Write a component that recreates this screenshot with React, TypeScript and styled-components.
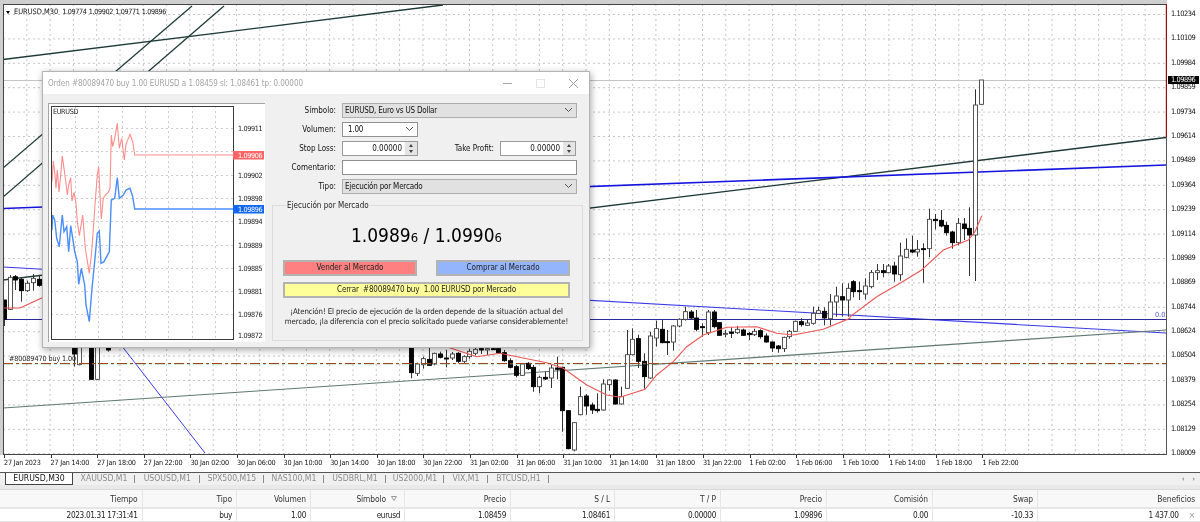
import React from "react";
import styled, { createGlobalStyle } from "styled-components";

const UI_FONT = `"DejaVu Sans Condensed", "Liberation Sans", sans-serif`;

const Global = createGlobalStyle`
  html, body { margin: 0; padding: 0; background: #fff; }
  body { font-family: ${UI_FONT}; overflow: hidden; }
  * { box-sizing: border-box; }
`;

const Page = styled.div`
  width: 1200px;
  height: 522px;
  overflow: hidden;
  display: flex;
  flex-direction: column;
  background: #fff;
  filter: blur(0.3px);
`;

/* ---------- chart ---------- */
const ChartArea = styled.section`
  position: relative;
  height: 472px;
  flex: none;
  display: flex;
  flex-direction: column;
  background: #fff;
`;
const ChartRow = styled.div`
  display: flex;
  height: 455px;
  flex: none;
`;
const PlotFrame = styled.div`
  width: 1167px;
  flex: none;
  padding: 4px 0 0 3px;
  background: #cfcfcf;
`;
const PlotSvg = styled.svg`
  display: block;
  width: 1164px;
  height: 451px;
  background: #fff;
`;
const PriceAxis = styled.div`
  position: relative;
  flex: 1;
  display: flex;
  flex-direction: column;
  gap: 16.4px;
  padding: 10px 0 0 4px;
`;
const PriceTick = styled.span`
  height: 8px;
  flex: none;
  line-height: 8px;
  font-size: 7.4px;
  letter-spacing: -0.45px;
  color: #111;
`;
const PriceBadge = styled.span`
  position: absolute;
  left: 1px;
  top: 76px;
  width: 31px;
  height: 8px;
  padding-left: 3px;
  line-height: 8px;
  font-size: 7.4px;
  letter-spacing: -0.45px;
  background: #000;
  color: #fff;
`;
const TimeAxis = styled.div`
  display: flex;
  height: 17px;
  padding-left: 4px;
`;
const TimeTick = styled.span`
  position: relative;
  width: 46.6px;
  flex: none;
  padding-top: 2px;
  line-height: 12px;
  font-size: 7.2px;
  letter-spacing: -0.2px;
  white-space: nowrap;
  color: #111;
  &::before {
    content: "";
    position: absolute;
    left: 0;
    top: 0;
    width: 1px;
    height: 3px;
    background: #333;
  }
`;
const Legend = styled.div`
  position: absolute;
  left: 6px;
  top: 6px;
  display: flex;
  align-items: center;
  gap: 4px;
  font-size: 7.4px;
  line-height: 12px;
  color: #111;
  white-space: nowrap;
`;
const LegendArrow = styled.i`
  width: 0;
  height: 0;
  border-left: 2.5px solid transparent;
  border-right: 2.5px solid transparent;
  border-top: 3px solid #000;
`;
const LegendValues = styled.span`
  font-size: 7.2px;
  letter-spacing: -0.35px;
  word-spacing: 0.5px;
`;
const OrderTag = styled.span`
  position: absolute;
  left: 9px;
  top: 353px;
  font-size: 7.2px;
  letter-spacing: -0.1px;
  line-height: 12px;
  color: #222;
  white-space: nowrap;
`;
const ZeroTag = styled.span`
  position: absolute;
  left: 1155px;
  top: 309px;
  font-size: 7.2px;
  line-height: 12px;
  color: #4a5ecb;
`;

/* ---------- dialog ---------- */
const Dialog = styled.div`
  position: absolute;
  left: 42px;
  top: 71px;
  width: 548px;
  height: 277px;
  display: flex;
  flex-direction: column;
  background: #f0f0f0;
  border: 1px solid #b4b4b4;
  box-shadow: 1px 2px 7px rgba(0, 0, 0, 0.35);
`;
const TitleBar = styled.header`
  height: 22px;
  flex: none;
  display: flex;
  align-items: center;
  justify-content: space-between;
  padding: 0 9px 0 5px;
  background: #fff;
`;
const TitleText = styled.span`
  font-size: 8px;
  letter-spacing: -0.06px;
  color: #a3a3a3;
  white-space: nowrap;
`;
const WindowButtons = styled.div`
  display: flex;
  align-items: center;
  gap: 20px;
`;
const WindowGlyph = styled.svg`
  display: block;
  width: 13px;
  height: 13px;
  fill: none;
  stroke-width: 1;
`;
const DialogBody = styled.div`
  flex: 1;
  display: flex;
  gap: 7px;
  padding: 9px 6px 6px 5px;
  min-height: 0;
`;
const MiniPanel = styled.div`
  width: 217px;
  flex: none;
  height: 239px;
  background: #fff;
  border-top: 1px solid #a5a5a5;
  border-left: 1px solid #a5a5a5;
`;
const MiniSvg = styled.svg`
  display: block;
  width: 216px;
  height: 238px;
`;
const MiniLabel = styled.text<{ $light?: boolean }>`
  font-size: 7.2px;
  letter-spacing: -0.35px;
  fill: ${(p) => (p.$light ? "#fff" : "#222")};
`;
const FormColumn = styled.div`
  flex: 1;
  display: flex;
  flex-direction: column;
  gap: 4px;
  min-width: 0;
`;
const FormRow = styled.div`
  display: flex;
  align-items: center;
  height: 15px;
`;
const FieldLabel = styled.label<{ $width?: number }>`
  width: ${(p) => p.$width ?? 64}px;
  flex: none;
  margin-right: 6px;
  text-align: right;
  font-size: 8px;
  color: #111;
  white-space: nowrap;
`;
const SelectBox = styled.div<{ $width?: number; $white?: boolean }>`
  width: ${(p) => (p.$width ? `${p.$width}px` : "235px")};
  height: 100%;
  display: flex;
  align-items: center;
  justify-content: space-between;
  padding: 0 3px 0 ${(p) => (p.$white ? 5 : 2)}px;
  font-size: 8px;
  letter-spacing: -0.2px;
  color: #111;
  background: ${(p) => (p.$white ? "#fff" : "#e1e1e1")};
  border: 1px solid ${(p) => (p.$white ? "#8f8f8f" : "#adadad")};
`;
const Chevron = styled.svg`
  width: 9px;
  height: 6px;
  fill: none;
  stroke: #555;
  stroke-width: 1;
`;
const SpinField = styled.div`
  width: 76px;
  height: 100%;
  display: flex;
  background: #fff;
  border: 1px solid #9a9a9a;
`;
const SpinValue = styled.span`
  flex: 1;
  text-align: right;
  padding-right: 3px;
  line-height: 13px;
  font-size: 8px;
  color: #111;
`;
const SpinButtons = styled.div`
  width: 12px;
  flex: none;
  display: flex;
  flex-direction: column;
  align-items: center;
  justify-content: space-evenly;
  background: #e4e4e4;
`;
const SpinArrow = styled.i<{ $up?: boolean }>`
  width: 0;
  height: 0;
  border-left: 2.5px solid transparent;
  border-right: 2.5px solid transparent;
  ${(p) => (p.$up ? "border-bottom" : "border-top")}: 3px solid #444;
`;
const TextField = styled.div`
  width: 235px;
  height: 100%;
  background: #fff;
  border: 1px solid #8f8f8f;
`;
const GroupBox = styled.fieldset`
  margin: 3px 0 0;
  padding: 0 12px 0 10px;
  height: 141px;
  min-width: 0;
  display: flex;
  flex-direction: column;
  border: 1px solid #dcdcdc;
`;
const GroupLegend = styled.legend`
  padding: 0 1px;
  margin-left: 3px;
  font-size: 8px;
  line-height: 10px;
  color: #222;
`;
const Quote = styled.div`
  margin-top: 12px;
  height: 24px;
  line-height: 24px;
  text-align: center;
  font-size: 19px;
  color: #000;
`;
const QuoteSmall = styled.span`
  font-size: 13px;
`;
const TradeRow = styled.div`
  margin-top: 13px;
  display: flex;
  justify-content: space-between;
`;
const TradeButton = styled.button<{ $tone: string; $wide?: boolean }>`
  width: ${(p) => (p.$wide ? "100%" : "134px")};
  height: 16px;
  padding: 0;
  border: 2px solid #b3b3b3;
  background: ${(p) => p.$tone};
  font: 8px ${UI_FONT};
  color: #222;
`;
const CloseLabel = styled.span`
  white-space: pre;
  letter-spacing: -0.15px;
`;
const CloseRow = styled.div`
  margin-top: 6px;
  display: flex;
`;
const Notice = styled.p`
  margin: 9px 0 0;
  text-align: center;
  font-size: 7.8px;
  letter-spacing: -0.1px;
  line-height: 10px;
  color: #222;
  white-space: nowrap;
`;

/* ---------- tabs ---------- */
const TabBar = styled.nav`
  height: 13px;
  flex: none;
  display: flex;
  align-items: stretch;
  padding-left: 5px;
  background: #f0f0f0;
  border-top: 1px solid #555;
`;
const ActiveTab = styled.span`
  width: 68px;
  flex: none;
  text-align: center;
  font-size: 8.6px;
  line-height: 11px;
  color: #111;
  background: #fff;
  border: 1px solid #444;
  border-top: none;
`;
const Tab = styled.span<{ $width: number }>`
  width: ${(p) => p.$width}px;
  flex: none;
  text-align: center;
  font-size: 8.6px;
  line-height: 11px;
  color: #8c8c8c;
  position: relative;
  &::after {
    content: "";
    position: absolute;
    right: 0;
    top: 2px;
    bottom: 2px;
    width: 1px;
    background: #8a8a8a;
  }
`;
const TabArrows = styled.span`
  margin-left: auto;
  display: flex;
  align-items: center;
  gap: 9px;
  padding-right: 5px;
`;
const TabArrow = styled.i<{ $right?: boolean }>`
  width: 0;
  height: 0;
  border-top: 2px solid transparent;
  border-bottom: 2px solid transparent;
  ${(p) => (p.$right ? "border-left" : "border-right")}: 2.5px solid #aaa;
`;

/* ---------- table ---------- */
const Spacer = styled.div`
  height: 4px;
  flex: none;
  background: #e9e9e9;
`;
const COLS = "142.5px 94.5px 74px 94px 106px 104px 106px 106px 106px 105px 1fr";
const Grid = styled.div<{ $head?: boolean }>`
  display: grid;
  grid-template-columns: ${COLS};
  height: ${(p) => (p.$head ? 18 : 15)}px;
  flex: none;
  background: ${(p) => (p.$head ? "#f8f8f8" : "#fff")};
  border-top: ${(p) => (p.$head ? "1px solid #d9d9d9" : "2px solid #e6e6e6")};
  border-bottom: ${(p) => (p.$head ? "none" : "1px solid #e2e2e2")};
`;
const Cell = styled.div<{ $head?: boolean }>`
  display: flex;
  align-items: center;
  justify-content: flex-end;
  gap: 5px;
  padding-right: 4px;
  font-size: ${(p) => (p.$head ? 8.4 : 8.2)}px;
  letter-spacing: ${(p) => (p.$head ? -0.1 : -0.35)}px;
  color: ${(p) => (p.$head ? "#333" : "#222")};
  border-right: 1px solid #e6e6e6;
  white-space: nowrap;
  &:last-child { border-right: none; padding-right: 5px; }
`;
const SortMark = styled.svg`
  width: 6px;
  height: 5px;
  margin-right: 3px;
  fill: none;
  stroke: #999;
`;
const RowClose = styled.span`
  margin-left: 5px;
  color: #999;
  font-size: 9px;
`;

/* ---------- chart data (page coordinates) ---------- */
type Row = [number, number, number, number, number, 0 | 1];

const Z8: Row[] = [
  [32,172,248,172,265,0],[50,222,250,218,258,1],[68,206,224,200,236,1],[86,208,226,172,228,0],[103,190,222,188,226,1],
  [121,192,202,185,205,0],[138,204,206,180,232,0],[156,192,204,186,210,1],[173,190,214,186,220,0],[191,200,214,196,222,1],
  [208,184,200,176,206,1],[225,178,190,174,196,1],[243,176,180,172,192,0],[260,176,180,172,195,1],[278,176,178,172,180,0],
  [295,176,188,170,192,0],[313,188,212,180,215,0],[330,212,232,205,235,0],[348,230,256,225,262,0],[365,222,256,220,258,1],
  [383,220,236,216,240,0],[400,232,290,225,305,0],[418,262,290,258,310,1],[435,262,267,245,270,0],[452,234,264,225,294,1],
  [470,234,238,200,268,0],[487,232,362,230,425,0],[505,362,476,362,478,0],[522,398,480,398,484,1],[540,320,374,290,376,1],
  [557,318,348,312,374,0],[575,345,360,338,372,0],[592,358,362,310,368,0],[609,282,360,268,362,1],[627,270,284,268,302,1],
  [645,270,342,268,344,0],[662,320,342,290,344,1],[680,194,295,120,296,1],[697,148,194,115,196,1],[715,146,214,134,234,0],
  [732,214,260,190,296,0],[750,138,264,125,266,1],[767,116,144,92,170,1],[785,118,158,90,160,0],[802,155,157,120,195,0],
  [819,108,156,105,182,1],[837,88,108,85,112,1],[854,65,88,50,92,1],[872,66,84,60,90,0],[889,84,118,60,124,0],
  [906,110,112,100,140,0],[923,66,128,60,135,1],[941,66,110,60,115,0],[958,98,136,96,138,0],[976,130,133,120,142,1],
  [993,126,130,112,144,0],[1010,118,128,108,132,1],[1028,120,136,116,138,0],[1046,130,134,126,150,0],[1063,124,134,116,138,1],
  [1081,122,140,118,146,0],[1098,138,156,130,158,0],[1116,156,174,154,186,0],[1133,168,176,165,188,0],[1151,142,176,140,186,1],
  [1168,124,140,120,146,1],[1186,94,124,92,126,1],[1203,95,104,85,110,0],[1220,99,106,88,108,1],[1238,70,100,50,104,1],
  [1255,62,70,50,72,1],[1272,64,84,52,106,0],[1290,36,86,12,106,1],[1308,18,36,-10,80,1],[1326,20,30,-20,80,0],[1344,-5,30,-20,80,1],
];
const Z7: Row[] = [
  [10,665,695,660,712,0],[28,692,694,665,720,0],[46,678,702,655,718,1],[64,638,680,630,685,1],[80,632,638,612,660,1],
  [98,632,638,612,652,0],[115,618,638,612,640,1],[132,618,642,605,665,0],[150,588,644,548,662,1],[167,568,592,535,595,1],
  [185,570,576,527,580,0],[202,568,576,540,590,1],[219,566,568,550,668,0],[237,478,566,446,592,1],[254,478,482,462,508,0],
  [272,481,498,450,502,0],[289,496,518,485,527,0],[306,516,548,512,566,0],[324,490,548,474,556,1],[341,492,506,474,540,0],
  [358,505,525,442,648,0],[376,135,525,88,663,1],[393,60,133,60,133,1],
];
const Z9: Row[] = [
  [12,120,178,120,198,0],[30,52,148,45,150,1],[46,50,60,45,90,0],[64,58,92,52,125,0],[82,70,92,62,96,1],[100,55,68,42,92,1],[117,58,76,45,80,0],
  [222,235,282,235,320,0],[238,235,314,235,316,1],[274,235,358,235,360,0],[291,235,358,235,360,1],[325,235,270,235,275,0],
];

type Candle = { x: number; top: number; bottom: number; high: number; low: number; bull: boolean };
const toCandles = (ox: number, oy: number, rows: Row[]): Candle[] =>
  rows.map(([zx, t, b, wt, wb, bull]) => ({
    x: Math.round(ox + zx / 3) + 0.5,
    top: oy + t / 3,
    bottom: oy + b / 3,
    high: oy + wt / 3,
    low: oy + wb / 3,
    bull: bull === 1,
  }));
const CANDLES = [...toCandles(0, 260, Z9), ...toCandles(400, 290, Z8), ...toCandles(850, 60, Z7)];

const zoomPoints = (ox: number, oy: number, pts: number[][]) =>
  pts.map(([x, y]) => `${(ox + x / 3).toFixed(1)},${(oy + y / 3).toFixed(1)}`).join(" ");

const MA_LEFT = "3,308 20,308 33,302 44,297";
const MA =
  zoomPoints(400, 290, [[-60,140],[140,170],[230,200],[300,190],[440,218],[490,235],[560,285],[620,315],[660,322],[735,298],[770,255],[820,215],[860,170],[910,135],[980,112],[1070,110],[1130,130],[1180,135],[1270,118],[1350,85]]) +
  " " +
  zoomPoints(850, 60, [[0,770],[80,710],[150,670],[215,630],[280,570],[355,540],[375,515],[395,468]]);

const H_YS = Array.from({ length: 19 }, (_, i) => 14.5 + i * 24.4);
const V_XS = Array.from({ length: 50 }, (_, i) => 3.5 + i * 23.3);
const PRICES = ["1.10234","1.10109","1.09984","1.09859","1.09734","1.09614","1.09489","1.09364","1.09239","1.09114","1.08989","1.08869","1.08744","1.08624","1.08504","1.08379","1.08254","1.08129","1.08009"];
const TIMES = ["27 Jan 2023","27 Jan 14:00","27 Jan 18:00","27 Jan 22:00","30 Jan 02:00","30 Jan 06:00","30 Jan 10:00","30 Jan 14:00","30 Jan 18:00","30 Jan 22:00","31 Jan 02:00","31 Jan 06:00","31 Jan 10:00","31 Jan 14:00","31 Jan 18:00","31 Jan 22:00","1 Feb 02:00","1 Feb 06:00","1 Feb 10:00","1 Feb 14:00","1 Feb 18:00","1 Feb 22:00"];
const TABS: [string, number][] = [["XAUUSD,M1",62],["USOUSD,M1",64.6],["SPX500,M15",64.4],["NAS100,M1",60],["USDBRL,M1",62],["US2000,M1",58],["VIX,M1",44],["BTCUSD,H1",61]];
const HEAD = ["Tiempo","Tipo","Volumen","Símbolo","Precio","S / L","T / P","Precio","Comisión","Swap","Beneficios"];
const VALUES = ["2023.01.31 17:31:41","buy","1.00","eurusd","1.08459","1.08461","0.00000","1.09896","0.00","-10.33","1 437.00"];

function MainChart() {
  return (
    <PlotSvg viewBox="3 4 1164 451">
      {H_YS.map((y) => (
        <line key={y} x1={3} x2={1166} y1={y} y2={y} stroke="#c6c6c6" strokeDasharray="2 3" />
      ))}
      {V_XS.map((x) => (
        <line key={x} x1={x} x2={x} y1={4} y2={455} stroke="#c6c6c6" strokeDasharray="2 3" />
      ))}
      <line x1={3} x2={1166} y1={80.5} y2={80.5} stroke="#c4c4c4" />
      {/* trend lines */}
      <g stroke="#1d3a36" strokeWidth={1.3} fill="none">
        <line x1={3} y1={59.5} x2={443} y2={5} />
        <line x1={3} y1={168} x2={192} y2={6} />
        <line x1={3} y1={197} x2={224} y2={6} />
        <line x1={3} y1={280} x2={1166} y2={137.5} />
      </g>
      <line x1={3} y1={208.5} x2={1166} y2={165} stroke="#1414e0" strokeWidth={1.6} />
      <line x1={3} y1={267} x2={1166} y2={333} stroke="#3a3ae8" strokeWidth={1.1} />
      <line x1={3} x2={1166} y1={319.5} y2={319.5} stroke="#2a2a9a" />
      <line x1={90} y1={305} x2={205} y2={453} stroke="#3a3af0" />
      <line x1={3} y1={408} x2={1166} y2={330} stroke="#5f7873" strokeWidth={1.1} />
      {/* candles */}
      {CANDLES.map((c) => (
        <g key={c.x + "-" + c.top}>
          <line x1={c.x} x2={c.x} y1={c.high} y2={c.low} stroke="#333" />
          <rect
            x={c.x - 2}
            y={c.top}
            width={4}
            height={Math.max(c.bottom - c.top, 1)}
            fill={c.bull ? "#fff" : "#000"}
            stroke={c.bull ? "#444" : "#000"}
            strokeWidth={0.9}
          />
        </g>
      ))}
      <polyline points={MA_LEFT} fill="none" stroke="#f05555" strokeWidth={1.1} />
      <polyline points={MA} fill="none" stroke="#f05555" strokeWidth={1.1} />
      {/* order level */}
      <line x1={3} x2={1166} y1={364.6} y2={364.6} stroke="#5fae7c" strokeWidth={0.6} opacity={0.55} strokeDasharray="10 3 3 3" />
      <line x1={3} x2={1166} y1={363.5} y2={363.5} stroke="#a8451c" strokeDasharray="10 3 3 3" />
      {/* frame */}
      <line x1={3.5} x2={3.5} y1={4} y2={455} stroke="#444" />
      <line x1={3} x2={1167} y1={4.5} y2={4.5} stroke="#444" />
      <line x1={3} x2={1167} y1={454.5} y2={454.5} stroke="#444" />
      <line x1={1166.5} x2={1166.5} y1={4} y2={137} stroke="#9c0d0d" strokeWidth={1.4} />
      <line x1={1166.5} x2={1166.5} y1={137} y2={455} stroke="#555" />
    </PlotSvg>
  );
}

const MINI_RED = [[36,260],[40,198],[45,240],[48,280],[52,225],[57,292],[62,240],[67,182],[72,220],[78,265],[82,300],[86,270],[92,248],[96,318],[102,292],[108,325],[112,380],[118,422],[128,360],[136,460],[148,535],[155,470],[165,330],[172,240],[176,215],[180,300],[184,372],[190,310],[196,300],[205,292],[210,280],[214,120],[218,155],[224,130],[232,85],[238,160],[245,130],[253,195],[258,148],[270,118],[278,140],[284,180],[580,180]];
const MINI_BLUE = [[36,405],[38,360],[44,375],[50,430],[58,455],[64,390],[67,360],[72,410],[80,395],[86,470],[92,392],[98,430],[104,470],[112,500],[116,568],[124,520],[134,570],[138,630],[148,680],[155,590],[165,490],[172,415],[178,408],[183,505],[192,500],[200,485],[208,470],[214,315],[224,310],[232,248],[238,310],[250,300],[258,285],[270,280],[278,305],[284,342],[580,342]];
const MINI_LABELS: [string, number][] = [["1.09911",128],["1.09902",175],["1.09898",198],["1.09894",221],["1.09889",245],["1.09885",268],["1.09881",291],["1.09876",314],["1.09872",335]];

function MiniChart() {
  return (
    <MiniSvg viewBox="49 104 216 238">
      {[128,151,175,198,221,245,268,291,314].map((y) => (
        <line key={y} x1={51} x2={233} y1={y + 0.5} y2={y + 0.5} stroke="#cdcdcd" strokeDasharray="2 3" />
      ))}
      {[75,98,122,145,168,192,215].map((x) => (
        <line key={x} x1={x + 0.5} x2={x + 0.5} y1={106} y2={339} stroke="#cdcdcd" strokeDasharray="2 3" />
      ))}
      <polyline points={zoomPoints(40, 95, MINI_RED)} fill="none" stroke="#ff8d8d" strokeWidth={1.1} />
      <polyline points={zoomPoints(40, 95, MINI_BLUE)} fill="none" stroke="#4a8dff" strokeWidth={1.4} />
      <rect x={51.5} y={106.5} width={182} height={233} fill="none" stroke="#3a3a3a" strokeWidth={1} />
      <MiniLabel x={53} y={114}>EURUSD</MiniLabel>
      {MINI_LABELS.map(([t, y]) => (
        <MiniLabel key={t} x={238} y={y + 3}>{t}</MiniLabel>
      ))}
      <rect x={233} y={151} width={31} height={8.5} fill="#ff6464" />
      <MiniLabel $light x={238} y={158}>1.09906</MiniLabel>
      <rect x={233} y={205} width={31} height={8.5} fill="#1268f5" />
      <MiniLabel $light x={238} y={212}>1.09896</MiniLabel>
    </MiniSvg>
  );
}

const Down = () => (
  <Chevron viewBox="0 0 9 6"><path d="M1 1l3.5 3.5L8 1" /></Chevron>
);

function OrderDialog() {
  return (
    <Dialog>
      <TitleBar>
        <TitleText>Orden #80089470 buy 1.00 EURUSD a 1.08459 sl: 1.08461 tp: 0.00000</TitleText>
        <WindowButtons>
          <WindowGlyph viewBox="0 0 13 13" stroke="#aaa"><path d="M2 6.5h9" /></WindowGlyph>
          <WindowGlyph viewBox="0 0 13 13" stroke="#e4e4e4"><rect x="2.5" y="2.5" width="8" height="8" /></WindowGlyph>
          <WindowGlyph viewBox="0 0 13 13" stroke="#999"><path d="M2 2l9 9M11 2l-9 9" /></WindowGlyph>
        </WindowButtons>
      </TitleBar>
      <DialogBody>
        <MiniPanel><MiniChart /></MiniPanel>
        <FormColumn>
          <FormRow>
            <FieldLabel>Símbolo:</FieldLabel>
            <SelectBox>EURUSD, Euro vs US Dollar<Down /></SelectBox>
          </FormRow>
          <FormRow>
            <FieldLabel>Volumen:</FieldLabel>
            <SelectBox $width={76} $white>1.00<Down /></SelectBox>
          </FormRow>
          <FormRow>
            <FieldLabel>Stop Loss:</FieldLabel>
            <SpinField>
              <SpinValue>0.00000</SpinValue>
              <SpinButtons><SpinArrow $up /><SpinArrow /></SpinButtons>
            </SpinField>
            <FieldLabel $width={76}>Take Profit:</FieldLabel>
            <SpinField>
              <SpinValue>0.00000</SpinValue>
              <SpinButtons><SpinArrow $up /><SpinArrow /></SpinButtons>
            </SpinField>
          </FormRow>
          <FormRow>
            <FieldLabel>Comentario:</FieldLabel>
            <TextField />
          </FormRow>
          <FormRow>
            <FieldLabel>Tipo:</FieldLabel>
            <SelectBox>Ejecución por Mercado<Down /></SelectBox>
          </FormRow>
          <GroupBox>
            <GroupLegend>Ejecución por Mercado</GroupLegend>
            <Quote>1.0989<QuoteSmall>6</QuoteSmall> / 1.0990<QuoteSmall>6</QuoteSmall></Quote>
            <TradeRow>
              <TradeButton $tone="#ff8080">Vender al Mercado</TradeButton>
              <TradeButton $tone="#94b4fb">Comprar al Mercado</TradeButton>
            </TradeRow>
            <CloseRow>
              <TradeButton $tone="#ffff99" $wide>
                <CloseLabel>{"Cerrar  #80089470 buy  1.00 EURUSD por Mercado"}</CloseLabel>
              </TradeButton>
            </CloseRow>
            <Notice>
              ¡Atención! El precio de ejecución de la orden depende de la situación actual del<br />
              mercado, ¡la diferencia con el precio solicitado puede variarse considerablemente!
            </Notice>
          </GroupBox>
        </FormColumn>
      </DialogBody>
    </Dialog>
  );
}

export default function App() {
  return (
    <Page>
      <Global />
      <ChartArea>
        <ChartRow>
          <PlotFrame><MainChart /></PlotFrame>
          <PriceAxis>
            {PRICES.map((p) => <PriceTick key={p}>{p}</PriceTick>)}
            <PriceBadge>1.09896</PriceBadge>
          </PriceAxis>
        </ChartRow>
        <TimeAxis>
          {TIMES.map((t) => <TimeTick key={t}>{t}</TimeTick>)}
        </TimeAxis>
        <Legend>
          <LegendArrow />
          <span>EURUSD,M30</span>
          <LegendValues>1.09774 1.09902 1.09771 1.09896</LegendValues>
        </Legend>
        <OrderTag>#80089470 buy 1.00</OrderTag>
        <ZeroTag>0.0</ZeroTag>
        <OrderDialog />
      </ChartArea>
      <TabBar>
        <ActiveTab>EURUSD,M30</ActiveTab>
        {TABS.map(([t, w]) => <Tab key={t} $width={w}>{t}</Tab>)}
        <TabArrows><TabArrow /><TabArrow $right /></TabArrows>
      </TabBar>
      <Spacer />
      <Grid $head>
        {HEAD.map((h, i) => (
          <Cell key={h + i} $head>
            {h}
            {h === "Símbolo" && (
              <SortMark viewBox="0 0 6 5"><path d="M0.5 0.5h5L3 4.5z" /></SortMark>
            )}
          </Cell>
        ))}
      </Grid>
      <Grid>
        {VALUES.map((v, i) => (
          <Cell key={v + i}>
            {v}
            {i === VALUES.length - 1 && <RowClose>×</RowClose>}
          </Cell>
        ))}
      </Grid>
    </Page>
  );
}
